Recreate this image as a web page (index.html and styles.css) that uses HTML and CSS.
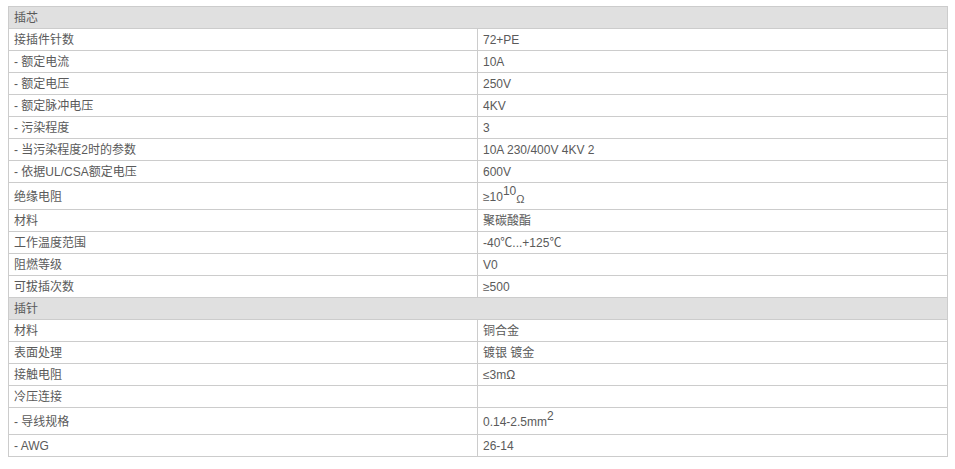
FILE: index.html
```html
<!DOCTYPE html>
<html lang="zh">
<head>
<meta charset="utf-8">
<link rel="stylesheet" href="styles.css">
</head>
<body>
<table class="spec">
  <colgroup><col class="c-name"><col class="c-val"></colgroup>
  <tbody>
    <tr class="group"><td colspan="2">插芯</td></tr>
    <tr><td>接插件针数</td><td>72+PE</td></tr>
    <tr><td>- 额定电流</td><td>10A</td></tr>
    <tr><td>- 额定电压</td><td>250V</td></tr>
    <tr><td>- 额定脉冲电压</td><td>4KV</td></tr>
    <tr><td>- 污染程度</td><td>3</td></tr>
    <tr><td>- 当污染程度2时的参数</td><td>10A 230/400V 4KV 2</td></tr>
    <tr><td>- 依据UL/CSA额定电压</td><td>600V</td></tr>
    <tr class="tall"><td>绝缘电阻</td><td>≥10<sup>10</sup><span class="ohm">Ω</span></td></tr>
    <tr><td>材料</td><td>聚碳酸酯</td></tr>
    <tr><td>工作温度范围</td><td>-40℃...+125℃</td></tr>
    <tr><td>阻燃等级</td><td>V0</td></tr>
    <tr><td>可拔插次数</td><td>≥500</td></tr>
    <tr class="group"><td colspan="2">插针</td></tr>
    <tr><td>材料</td><td>铜合金</td></tr>
    <tr><td>表面处理</td><td>镀银 镀金</td></tr>
    <tr><td>接触电阻</td><td>≤3mΩ</td></tr>
    <tr><td>冷压连接</td><td></td></tr>
    <tr class="tall"><td>- 导线规格</td><td>0.14-2.5mm<sup>2</sup></td></tr>
    <tr><td>- AWG</td><td>26-14</td></tr>
  </tbody>
</table>
</body>
</html>
```
FILE: styles.css
```css
html, body {
  margin: 0;
  padding: 0;
  background: #ffffff;
}
body {
  padding: 6px 0 0 8px;
  font-family: "Liberation Sans", Arial, "Noto Sans CJK SC", sans-serif;
  font-size: 12px;
  color: #5a5a5a;
}
.spec {
  border-collapse: separate;
  border-spacing: 0;
  width: 940px;
  table-layout: fixed;
  border-top: 1px solid #cccccc;
  border-left: 1px solid #cccccc;
}
.c-name { width: 469px; }
.spec td {
  border-right: 1px solid #cccccc;
  border-bottom: 1px solid #cccccc;
  height: 21px;
  padding: 0 5px;
  line-height: 14px;
  vertical-align: middle;
  white-space: nowrap;
  box-sizing: content-box;
}
.spec tr.group td {
  background: #e0e0e0;
}
.spec tr.tall td {
  height: 26px;
  padding-top: 2px;
  padding-bottom: 0;
  box-sizing: border-box;
  height: 27px;
}
.spec sup {
  font-size: 12px;
  line-height: 0;
  vertical-align: 6px;
}
.ohm {
  font-size: 11px;
  line-height: 0;
  vertical-align: -2px;
}
```
